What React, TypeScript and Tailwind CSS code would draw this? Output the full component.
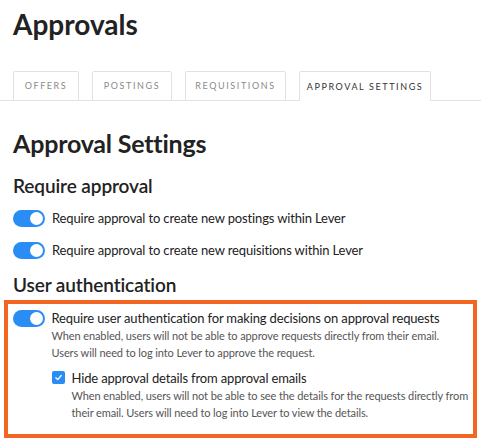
import { FC } from 'react';

const tabs = [
    { label: 'Offers', w: 'w-[66px]' },
    { label: 'Postings', w: 'w-[80px]' },
    { label: 'Requisitions', w: 'w-[101px]' },
    { label: 'Approval settings', w: 'w-[132px]' },
];

const Toggle: FC = () => (
    <span className="relative inline-block w-[32px] h-[17px] rounded-full bg-[#2a8cf5] shrink-0">
        <span className="absolute right-[2px] top-[2px] w-[13px] h-[13px] rounded-full bg-white" />
    </span>
);

const App: FC = () => {
    return (
        <div className="w-[481px] h-[444px] bg-white text-[#222] overflow-hidden font-['Lato','Noto_Sans',sans-serif]">
            <h1 className="pl-[13px] pt-[6px] text-[28px] font-bold leading-[36px]">Approvals</h1>

            <div className="flex items-end mt-[29px] pl-[13px] border-b border-[#e2e2e2] h-[30px]">
                {tabs.map((tab, i) => {
                    const active = i === tabs.length - 1;
                    return (
                        <div
                            key={tab.label}
                            className={
                                active
                                    ? `${tab.w} mr-[13px] h-[30px] -mb-px flex items-center justify-center whitespace-nowrap border border-b-0 border-[#e2e2e2] rounded-t-[2px] bg-white text-[9px] uppercase tracking-[1.6px] text-[#333]`
                                    : `${tab.w} mr-[13px] h-[30px] -mb-px flex items-center justify-center whitespace-nowrap border border-[#e2e2e2] rounded-t-[2px] text-[9px] uppercase tracking-[1.6px] text-[#8a8a8a]`
                            }
                        >
                            {tab.label}
                        </div>
                    );
                })}
            </div>

            <h2 className="pl-[13px] mt-[26px] text-[25px] font-bold leading-[32px] tracking-[-0.2px]">Approval Settings</h2>

            <h3 className="pl-[13px] mt-[15px] text-[19px] font-semibold leading-[24px] tracking-[-0.1px]">Require approval</h3>
            <div className="pl-[13px] mt-[12px] flex flex-col gap-[15px] text-[13px] tracking-[-0.15px]">
                <div className="flex items-center gap-[7px] h-[17px]">
                    <Toggle />
                    <span>Require approval to create new postings within Lever</span>
                </div>
                <div className="flex items-center gap-[7px] h-[17px]">
                    <Toggle />
                    <span>Require approval to create new requisitions within Lever</span>
                </div>
            </div>

            <h3 className="pl-[13px] mt-[14px] text-[19px] font-semibold leading-[24px] tracking-[-0.1px]">User authentication</h3>

            <div className="mx-[4px] mt-[3px] h-[138px] border-[4.5px] border-[#f26522] pl-[4.5px] pt-[5px]">
                <div className="flex gap-[7px]">
                    <div>
                        <Toggle />
                    </div>
                    <div className="whitespace-nowrap">
                        <div className="text-[13px] leading-[18px] tracking-[-0.15px]">
                            Require user authentication for making decisions on approval requests
                        </div>
                        <p className="text-[11px] leading-[17px] text-[#555] tracking-[-0.1px]">
                            When enabled, users will not be able to approve requests directly from their email.
                            <br />
                            Users will need to log into Lever to approve the request.
                        </p>
                        <div className="flex gap-[7px] mt-[8px]">
                            <span className="mt-[2px] w-[13px] h-[13px] rounded-[2px] bg-[#2a8cf5] flex items-center justify-center shrink-0">
                                <svg width="9" height="9" viewBox="0 0 10 10" fill="none">
                                    <path d="M2 5.2 L4.2 7.3 L8 2.8" stroke="white" strokeWidth="1.4" strokeLinecap="round" strokeLinejoin="round" />
                                </svg>
                            </span>
                            <div>
                                <div className="text-[13px] leading-[18px] tracking-[-0.15px]">Hide approval details from approval emails</div>
                                <p className="text-[11px] leading-[17px] text-[#555] tracking-[-0.1px]">
                                    When enabled, users will not be able to see the details for the requests directly from
                                    <br />
                                    their email. Users will need to log into Lever to view the details.
                                </p>
                            </div>
                        </div>
                    </div>
                </div>
            </div>
        </div>
    );
};
export default App;
